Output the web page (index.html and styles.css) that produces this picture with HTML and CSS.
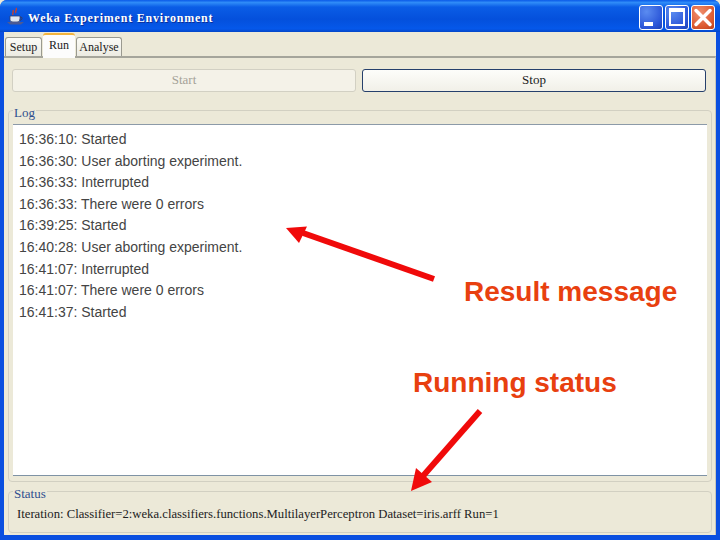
FILE: index.html
```html
<!DOCTYPE html>
<html lang="en">
<head>
<meta charset="utf-8">
<title>Weka Experiment Environment</title>
<link rel="stylesheet" href="styles.css">
</head>
<body>
<div class="window">
  <header class="titlebar">
    <svg class="app-icon" viewBox="0 0 20 20" width="20" height="20">
      <path d="M10 1c2 2-2 3 0 5M7 3c1 2-1 3 0 5" fill="none" stroke="#c8402c" stroke-width="1.4"/>
      <path d="M4 9h10v4q0 2-3 2H7q-3 0-3-2z" fill="#dfe6f2" stroke="#33406e" stroke-width=".8"/>
      <path d="M14 10q3 0 2 2t-3 1" fill="none" stroke="#33406e"/>
      <path d="M1 15h17l-3 2.500H4z" fill="#4c5a94"/>
    </svg>
    <span class="title">Weka Experiment Environment</span>
    <div class="controls">
      <span class="ctl ctl-min"><i class="min-glyph"></i></span>
      <span class="ctl ctl-max"><i class="max-glyph"></i></span>
      <span class="ctl ctl-close">
        <svg viewBox="0 0 22 22" width="22" height="23"><path d="M4 4l14 14M18 4L4 18" stroke="#fff" stroke-width="3.500" stroke-linecap="round"/></svg>
      </span>
    </div>
  </header>
  <main class="client">
    <nav class="tabs">
      <span class="tab">Setup</span>
      <span class="tab tab-active">Run</span>
      <span class="tab tab-last">Analyse</span>
    </nav>
    <section class="panel">
      <div class="actions">
        <button class="btn btn-off">Start</button>
        <button class="btn btn-on">Stop</button>
      </div>
      <div class="group group-log">
        <span class="legend">Log</span>
        <div class="log">
          <div>16:36:10: Started</div>
          <div>16:36:30: User aborting experiment.</div>
          <div>16:36:33: Interrupted</div>
          <div>16:36:33: There were 0 errors</div>
          <div>16:39:25: Started</div>
          <div>16:40:28: User aborting experiment.</div>
          <div>16:41:07: Interrupted</div>
          <div>16:41:07: There were 0 errors</div>
          <div>16:41:37: Started</div>
        </div>
      </div>
      <div class="group group-status">
        <span class="legend">Status</span>
        <div class="status">Iteration: Classifier=2:weka.classifiers.functions.MultilayerPerceptron Dataset=iris.arff Run=1</div>
      </div>
    </section>
  </main>
  <svg class="arrows" viewBox="0 0 720 540" width="720" height="540">
    <path d="M434 279L303 233" stroke="#f00a0a" stroke-width="6"/>
    <path d="M286 228L307 226.500L299 243z" fill="#f00a0a"/>
    <path d="M480 411L423 476" stroke="#f00a0a" stroke-width="6"/>
    <path d="M411 491L416 468L432 482z" fill="#f00a0a"/>
  </svg>
  <span class="note note-result">Result message</span>
  <span class="note note-running">Running status</span>
</div>
</body>
</html>
```
FILE: styles.css
```css
* { box-sizing: border-box; }
html, body { margin: 0; padding: 0; }
body { width: 720px; height: 540px; overflow: hidden; background: #ece9d8; }

.window {
  position: relative;
  width: 720px;
  height: 540px;
  display: flex;
  flex-direction: column;
  background: #0a4fe0;
  border-radius: 7px 7px 0 0;
  overflow: hidden;
}

.titlebar {
  height: 32px;
  flex: none;
  display: flex;
  align-items: center;
  padding: 0 5px 0 6px;
  background: linear-gradient(#0a5ae8 0, #2f8cf8 8%, #0a5de6 22%, #0450dc 60%, #0558ea 90%, #0446c8 100%);
}
.app-icon { flex: none; margin-top: 2px; }
.title {
  margin: 4px 0 0 2px;
  font: bold 12px "Liberation Serif", serif;
  letter-spacing: 0.8px;
  color: #fff;
  text-shadow: 1px 1px 0 #0a2f9a;
}
.controls { margin-left: auto; display: flex; gap: 2px; margin-top: 2px; }
.ctl {
  width: 24px;
  height: 25px;
  border: 1px solid #fff;
  border-radius: 3px;
  position: relative;
  display: flex;
  align-items: center;
  justify-content: center;
  background: radial-gradient(circle at 30% 25%, #5b8cf0, #2a55d8 70%, #1c3fb4);
}
.ctl-close { background: radial-gradient(circle at 35% 30%, #f09070, #dc5a30 65%, #b8401c); }
.min-glyph { position: absolute; left: 4px; bottom: 3px; width: 9px; height: 4px; background: #fff; }
.max-glyph { width: 16px; height: 18px; border: 2px solid #fff; border-top-width: 4px; display: block; }

.client {
  flex: 1;
  margin: 0 4px 5px;
  background: #ece9d8;
  display: flex;
  flex-direction: column;
  min-height: 0;
}

.tabs {
  height: 24px;
  flex: none;
  display: flex;
  align-items: flex-end;
  padding-left: 1px;
  position: relative;
  z-index: 1;
}
.tab {
  height: 19px;
  width: 37px;
  margin-right: 1px;
  background: linear-gradient(#fbfbf6, #ecebe2);
  border: 1px solid #9a9a90;
  border-bottom: 0;
  border-radius: 3px 3px 0 0;
  font: 12px/19px "Liberation Serif", serif;
  color: #222;
  text-align: center;
}
.tab-active {
  height: 25px;
  width: 32px;
  margin-bottom: -2px;
  background: #fcfcfc;
  border: 0;
  border-top: 2px solid #f2b33d;
  line-height: 21px;
}
.tab-last { width: 46px; margin-right: 0; }

.panel {
  flex: 1;
  min-height: 0;
  display: flex;
  flex-direction: column;
  border-top: 2px solid #a5a59b;
  border-right: 1px solid #c9c7ba;
  padding: 11px 3px 2px 4px;
}

.actions { display: flex; gap: 6px; padding: 0 6px 0 4px; flex: none; }
.btn {
  flex: 1;
  height: 23px;
  padding: 0 0 2px;
  border-radius: 3px;
  font: 13px "Liberation Serif", serif;
}
.btn-off { background: #f4f2e8; border: 1px solid #d2d0c3; color: #a5a398; }
.btn-on { background: linear-gradient(#fdfdfa, #f1f0e8); border: 1px solid #26406c; color: #222; }

.group {
  position: relative;
  border: 1px solid #d2d0c2;
  border-radius: 4px;
}
.legend {
  position: absolute;
  top: -5px;
  left: 4px;
  padding: 0 1px;
  background: #ece9d8;
  font: 13px/14px "Liberation Serif", serif;
  color: #2f4f8f;
}
.group-log {
  flex: 1;
  min-height: 0;
  margin-top: 18px;
  padding: 13px 4px 5px;
}
.log {
  height: 100%;
  background: #fff;
  border-top: 1px solid #8c9aa8;
  border-bottom: 1px solid #7f93a5;
  padding: 4px 6px;
  font: 14px/21.6px "Liberation Sans", Arial, sans-serif;
  color: #444;
}
.group-status {
  flex: none;
  height: 42px;
  margin-top: 9px;
  padding: 14px 0 0 8px;
}
.status {
  font: 12.7px/17px "Liberation Serif", serif;
  color: #222;
  white-space: nowrap;
}

.arrows { position: absolute; left: 0; top: 0; pointer-events: none; }
.note {
  position: absolute;
  font: bold 28px/32px "Liberation Sans", Arial, sans-serif;
  color: #e8400f;
  white-space: nowrap;
}
.note-result { left: 464px; top: 276px; }
.note-running { left: 413px; top: 367px; }
```
